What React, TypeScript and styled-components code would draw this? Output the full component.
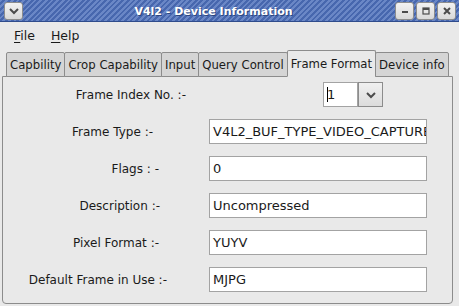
import React from "react";
import styled, { createGlobalStyle } from "styled-components";

const colors = {
  window: "#e9e9e9",
  tab: "#d5d5d5",
  border: "#8c8c8c",
  entryBorder: "#a3a3a3",
  text: "#1a1a1a",
  titleA: "#4767ae",
  titleB: "#6a87c6",
  glyph: "#4b4b4b",
};

const GlobalStyle = createGlobalStyle`
  html, body {
    margin: 0;
    padding: 0;
    background: ${colors.window};
  }
  body {
    font-family: "DejaVu Sans", "Liberation Sans", sans-serif;
    font-size: 12px;
    color: ${colors.text};
  }
`;

const tabs = [
  "Capbility",
  "Crop Capability",
  "Input",
  "Query Control",
  "Frame Format",
  "Device info",
];

const fields = [
  { label: "Frame Type :-", value: "V4L2_BUF_TYPE_VIDEO_CAPTURE", inset: 56 },
  { label: "Flags : -", value: "0", inset: 50 },
  { label: "Description :-", value: "Uncompressed", inset: 49 },
  { label: "Pixel Format :-", value: "YUYV", inset: 50 },
  { label: "Default Frame in Use :-", value: "MJPG", inset: 42 },
];

const Chevron = () => (
  <svg width="12" height="8" viewBox="0 0 12 8">
    <path d="M2 2 L6 6 L10 2" fill="none" stroke={colors.glyph} strokeWidth="2" />
  </svg>
);

export default function App() {
  return (
    <Window>
      <GlobalStyle />
      <TitleBar>
        <WmButton>
          <Chevron />
        </WmButton>
        <Title>V4l2 - Device Information</Title>
        <WmGroup>
          <WmButton>
            <svg width="10" height="10" viewBox="0 0 10 10">
              <rect x="2" y="5" width="6" height="2" fill={colors.glyph} />
            </svg>
          </WmButton>
          <WmButton>
            <svg width="10" height="10" viewBox="0 0 10 10">
              <rect x="2" y="2" width="6" height="6" fill="none" stroke={colors.glyph} strokeWidth="1.2" />
              <rect x="2" y="2" width="6" height="2" fill={colors.glyph} />
            </svg>
          </WmButton>
          <WmButton>
            <svg width="10" height="10" viewBox="0 0 10 10">
              <path d="M2 2 L8 8 M8 2 L2 8" stroke={colors.glyph} strokeWidth="2" />
            </svg>
          </WmButton>
        </WmGroup>
      </TitleBar>

      <MenuBar>
        <MenuItem>
          <u>F</u>ile
        </MenuItem>
        <MenuItem>
          <u>H</u>elp
        </MenuItem>
      </MenuBar>

      <TabStrip>
        {tabs.map((t) => (
          <Tab key={t} $active={t === "Frame Format"}>
            {t}
          </Tab>
        ))}
      </TabStrip>

      <Panel>
        <Row>
          <Label $inset={23}>Frame Index No. :-</Label>
          <SpinWrap>
            <SpinEntry>
              <Caret />1
            </SpinEntry>
            <SpinButton>
              <Chevron />
            </SpinButton>
          </SpinWrap>
        </Row>
        {fields.map((f) => (
          <Row key={f.label}>
            <Label $inset={f.inset}>{f.label}</Label>
            <Entry>{f.value}</Entry>
          </Row>
        ))}
      </Panel>
    </Window>
  );
}

const Window = styled.div`
  width: 459px;
  height: 306px;
  display: flex;
  flex-direction: column;
  background: ${colors.window};
  overflow: hidden;
`;

const TitleBar = styled.div`
  height: 22px;
  display: flex;
  align-items: center;
  padding: 0 3px 0 4px;
  background: repeating-linear-gradient(
    -45deg,
    ${colors.titleA} 0px,
    ${colors.titleA} 2px,
    ${colors.titleB} 2px,
    ${colors.titleB} 4px
  );
  box-shadow: inset 0 -1px 0 #2f4c8c;
`;

const Title = styled.div`
  flex: 1;
  text-align: center;
  color: #fff;
  font-weight: bold;
  font-size: 11px;
  padding-left: 9px;
  text-shadow: 1px 1px 0 #2b467f;
`;

const WmGroup = styled.div`
  display: flex;
  gap: 2px;
`;

const WmButton = styled.div`
  width: 17px;
  height: 16px;
  display: flex;
  align-items: center;
  justify-content: center;
  background: linear-gradient(#f2f2f2, #d9d9d9);
  border: 1px solid #8d8d8d;
  border-radius: 3px;
`;

const MenuBar = styled.div`
  height: 27px;
  display: flex;
  align-items: center;
  gap: 16px;
  padding-left: 14px;
  font-size: 12.5px;
`;

const MenuItem = styled.span`
  u {
    text-decoration-thickness: 1px;
    text-underline-offset: 2px;
  }
`;

const TabStrip = styled.div`
  height: 27px;
  display: flex;
  align-items: flex-end;
  padding-left: 6px;
  position: relative;
  z-index: 1;
`;

const Tab = styled.div<{ $active?: boolean }>`
  height: ${(p) => (p.$active ? 27 : 25)}px;
  box-sizing: border-box;
  display: flex;
  align-items: center;
  padding: 0 3px;
  font-size: 11.7px;
  background: ${(p) => (p.$active ? colors.window : colors.tab)};
  border: 1px solid ${colors.border};
  border-bottom: 1px solid ${(p) => (p.$active ? colors.window : colors.border)};
  border-radius: 2px 2px 0 0;
  margin-right: -1px;
  margin-bottom: -1px;
  white-space: nowrap;
`;

const Panel = styled.div`
  flex: 1;
  margin: 0 6px 2px 2px;
  border: 1px solid ${colors.border};
  border-radius: 0 0 4px 4px;
  padding-top: 5px;
  display: flex;
  flex-direction: column;
  gap: 12px;
`;

const Row = styled.div`
  display: grid;
  grid-template-columns: 206px 1fr;
  align-items: center;
  height: 25px;
`;

const Label = styled.div<{ $inset: number }>`
  text-align: right;
  padding-right: ${(p) => p.$inset}px;
  white-space: nowrap;
`;

const Entry = styled.div`
  width: 218px;
  height: 25px;
  box-sizing: border-box;
  display: flex;
  align-items: center;
  padding-left: 3px;
  font-size: 13px;
  background: #fff;
  border: 1px solid ${colors.entryBorder};
  white-space: nowrap;
  overflow: hidden;
`;

const SpinWrap = styled.div`
  display: flex;
  margin-left: 114px;
`;

const SpinEntry = styled(Entry)`
  width: 35px;
`;

const Caret = styled.span`
  display: inline-block;
  width: 1px;
  height: 15px;
  background: #000;
  margin-right: -1px;
`;

const SpinButton = styled.div`
  width: 25px;
  height: 25px;
  box-sizing: border-box;
  display: flex;
  align-items: center;
  justify-content: center;
  background: linear-gradient(#f0f0f0, #dcdcdc);
  border: 1px solid ${colors.border};
`;
